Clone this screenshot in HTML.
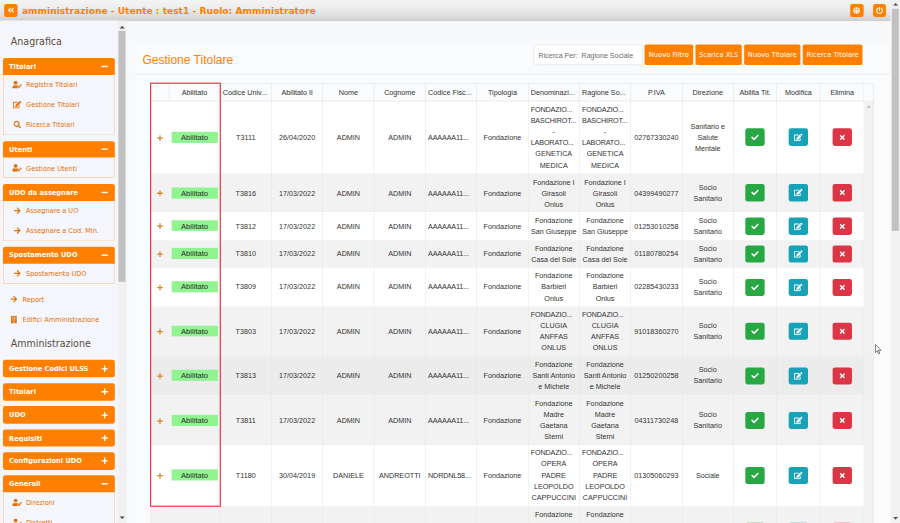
<!DOCTYPE html>
<html lang="it">
<head>
<meta charset="utf-8">
<title>amministrazione</title>
<style>
*{box-sizing:border-box}
html,body{margin:0;padding:0;width:900px;height:523px;overflow:hidden;background:#f5f6fa}
body{font-family:"Liberation Sans",sans-serif}
#app{position:absolute;left:0;top:0;width:1536px;height:893px;transform:scale(.5859375);transform-origin:0 0;overflow:hidden;background:#f8f9fb}
svg{display:block}
/* top bar */
#top{position:absolute;left:0;top:0;width:1520px;height:36px;background:linear-gradient(#f4f4f4 0%,#eeeeee 35%,#dedede 75%,#cecece 100%)}
.tbtn{position:absolute;top:6.6px;width:22.6px;height:22.6px;background:#ff8000;border-radius:4px;display:flex;align-items:center;justify-content:center}
#ttl{position:absolute;left:37.5px;top:0;height:35px;font:bold 15.55px/38.6px "DejaVu Sans","Liberation Sans",sans-serif;color:#ff8000;white-space:nowrap}
/* sidebar */
#side{position:absolute;left:0;top:35px;width:201px;height:858px;background:#f4f6fb;overflow:hidden;font-family:"DejaVu Sans Condensed","Liberation Sans",sans-serif}
#sbar{position:absolute;left:201px;top:35px;width:14.8px;height:858px;background:#f1f1f1}
#sbar i{position:absolute;left:1.2px;width:11.6px;background:#c1c1c1}
.h{font-size:18px;color:#5b4a40;height:64.2px;line-height:30px;padding:19.5px 0 0 18.5px;white-space:nowrap}
.h2{height:51.3px;padding-top:9.1px}
.sec{margin:0 5px 9.8px 5px;width:191px}
.sh{height:28.6px;background:#ff8000;border-radius:4px 4px 0 0;color:#fff;font-weight:bold;font-size:12.6px;line-height:28.6px;padding-left:10.5px;position:relative;white-space:nowrap}
.sh.c{height:29.8px;line-height:29.8px;border-radius:4px}
.sec.c{margin-bottom:9.6px}
.sh b{position:absolute;right:12px;top:0;height:100%;display:flex;align-items:center}
.sb{border:1px solid #ffbb7a;border-top:0;border-radius:0 0 4px 4px}
.it{height:34px;display:flex;align-items:center;padding-left:15px;color:#e46f08;font-size:12.4px;white-space:nowrap}
.it u{text-decoration:none;display:flex;justify-content:center;width:17px;margin-right:6.5px;flex:none}
.it.o{padding-left:15px;height:35px}
.it.o1{margin-top:-1.2px;height:34.6px}
/* main */
#panel{position:absolute;left:229px;top:75px;width:1290.5px;height:830px;background:#fafbfc}
#ph{position:absolute;left:0;top:0;width:100%;height:51.8px;border-bottom:1.4px solid #dde2e8}
#pt{position:absolute;left:14px;top:0;line-height:53.4px;font-size:20.5px;color:#ff8000;white-space:nowrap}
.btn{position:absolute;top:.5px;height:35.4px;background:#ff8000;border-radius:3px;color:#fff;font:12.8px/35.4px "DejaVu Sans Condensed","Liberation Sans",sans-serif;text-align:center;white-space:nowrap}
#inp{position:absolute;left:682px;top:.5px;width:184.5px;height:35.4px;background:#fff;border:1px solid #dcdfe4;border-radius:4px;font-size:12.1px;line-height:36px;color:#6c6c6c;padding-left:7.2px;white-space:nowrap}
/* grid */
#grid{position:absolute;z-index:0;left:27.4px;top:67.4px;width:1234.6px;font-size:12.3px;color:#333}
table{border-collapse:collapse;table-layout:fixed;width:1217.6px}
col.w{width:87.6px}
th{height:29.2px;font-weight:normal;text-align:center;border:1px solid #e1e4e9;padding:2px 0 0 0;white-space:nowrap;background:#fafbfc;overflow:hidden}
th.l{text-align:left;padding-left:4px}
td i{display:block;font-style:normal;text-align:left;padding-left:4px;letter-spacing:-.25px}
td{padding:var(--p) 0 0 0;text-align:center;line-height:19px;border-left:1px solid #e6e7e9;border-right:1px solid #e6e7e9;white-space:nowrap}
td.b{padding-top:0}
td:first-child{border-right:0}td:nth-child(2){border-left:0}
td:first-child{position:relative}
td:first-child::before{content:"";position:absolute;left:0;top:0;width:1218.2px;height:100%;z-index:-1;background:#fff}
tr.g td:first-child::before{background:#f2f2f2}
tr.hv td:first-child::before{background:#ececec}
tr.n2{height:47.5px}tr.n3{height:66.5px}tr.n4{height:85.5px}tr.n5{height:104.5px}tr.n6{height:123.5px}
.pill{display:block;margin:0 auto;width:79px;height:18.9px;line-height:20.4px;font-size:13px;background:#90f490;color:#2a2a2a;position:relative;left:.3px;top:-1.1px}
.ab{display:flex;width:33px;height:29.3px;border-radius:4px;margin:0 auto;align-items:center;justify-content:center}
.gr{background:#28a745}.bl{background:#17a2b8}.rd{background:#dc3545}
#gsc{position:absolute;left:1218.6px;top:30.2px;width:16px;height:800px;background:#f1f1f1;border-right:1px solid #e4e4e4}
#gsh{position:absolute;left:1218.6px;top:0;width:16px;height:30.2px;background:#fafbfc;border:1px solid #e1e4e9;border-left:0}
#red{position:absolute;left:26.8px;top:66.3px;width:121.5px;height:723.5px;border:2.6px solid #ec3440;pointer-events:none}
#pbar{position:absolute;left:1520px;top:0;width:16px;height:893px;background:#f1f1f1}
#pbar i{position:absolute;left:2px;width:12px;background:#c1c1c1}
.ar{position:absolute}
</style>
</head>
<body>
<div id="app">

<div id="top">
 <div class="tbtn" style="left:7.3px"><svg width="11.38" height="13" viewBox="0 0 448 512"><path fill="#fff" d="M223.700 239l136-136c9.400-9.400 24.600-9.400 33.900 0l22.600 22.600c9.400 9.400 9.400 24.600 0 33.900L319.900 256l96.400 96.400c9.400 9.400 9.400 24.600 0 33.900L393.700 409c-9.400 9.400-24.600 9.400-33.900 0l-136-136c-9.500-9.400-9.500-24.600-.1-34zm-192 34l136 136c9.400 9.400 24.600 9.400 33.900 0l22.600-22.600c9.400-9.400 9.400-24.600 0-33.900L127.900 256l96.400-96.400c9.400-9.400 9.400-24.600 0-33.900L201.700 103c-9.400-9.400-24.600-9.400-33.900 0l-136 136c-9.500 9.400-9.500 24.600-.1 34z"/></svg></div>
 <div id="ttl">amministrazione - Utente : test1 - Ruolo: Amministratore</div>
 <div class="tbtn" style="left:1451px"><svg width="11.62" height="12" viewBox="0 0 496 512"><path fill="#fff" d="M336.500 160C322 70.700 287.800 8 248 8s-74 62.700-88.500 152h177zM152 256c0 22.200 1.200 43.500 3.300 64h185.300c2.100-20.500 3.300-41.800 3.300-64s-1.200-43.500-3.300-64H155.300c-2.100 20.500-3.300 41.800-3.300 64zm324.700-96c-28.600-67.900-86.500-120.400-158-141.600 24.400 33.800 41.200 84.700 50 141.600h108zM177.200 18.400C105.800 39.600 47.800 92.100 19.300 160h108c8.700-56.900 25.500-107.800 49.900-141.600zM487.400 192H372.700c2.100 21 3.300 42.500 3.300 64s-1.200 43-3.300 64h114.600c5.500-20.500 8.600-41.800 8.600-64s-3.100-43.500-8.500-64zM120 256c0-21.500 1.200-43 3.300-64H8.600C3.200 212.500 0 233.800 0 256s3.200 43.500 8.600 64h114.600c-2-21-3.200-42.500-3.200-64zm39.500 96c14.500 89.300 48.700 152 88.500 152s74-62.700 88.500-152h-177zm159.300 141.600c71.400-21.200 129.400-73.700 158-141.600h-108c-8.800 56.900-25.600 107.800-50 141.600zM19.300 352c28.600 67.900 86.500 120.400 158 141.600-24.400-33.800-41.200-84.700-50-141.600h-108z"/></svg></div>
 <div class="tbtn" style="left:1489.5px"><svg width="12.0" height="12" viewBox="0 0 512 512"><path fill="#fff" d="M400 54.100c63 45 104 118.600 104 201.900 0 136.800-110.800 247.700-247.500 248C120 504.300 8.200 393 8 256.400 7.900 173.100 48.900 99.300 111.800 54.200c11.700-8.300 28-4.800 35 7.700L162.600 90c5.900 10.500 3.100 23.800-6.600 31-41.500 30.800-68 79.600-68 134.900-.1 92.300 74.500 168.100 168 168.100 91.600 0 168.600-74.200 168-169.100-.3-51.800-24.700-101.800-68.100-134-9.700-7.200-12.400-20.500-6.500-30.900l15.800-28.100c7-12.400 23.200-16.100 34.800-7.800zM296 264V24c0-13.300-10.700-24-24-24h-32c-13.300 0-24 10.700-24 24v240c0 13.300 10.700 24 24 24h32c13.300 0 24-10.700 24-24z"/></svg></div>
</div>

<div id="side">
<div class="h">Anagrafica</div>
<div class="sec"><div class="sh">Titolari<b><svg width="11.38" height="13" viewBox="0 0 448 512"><path fill="#fff" d="M416 208H32c-17.67 0-32 14.33-32 32v32c0 17.67 14.33 32 32 32h384c17.670 0 32-14.330 32-32v-32c0-17.670-14.330-32-32-32z"/></svg></b></div><div class="sb"><div class="it"><u><svg width="16.25" height="13" viewBox="0 0 640 512"><path fill="#e46f08" d="M224 256c70.700 0 128-57.300 128-128S294.700 0 224 0 96 57.300 96 128s57.300 128 128 128zm89.600 32h-16.700c-22.200 10.200-46.900 16-72.900 16s-50.600-5.800-72.900-16h-16.700C60.200 288 0 348.200 0 422.400V464c0 26.500 21.500 48 48 48h274.900c-2.400-6.800-3.400-14-2.600-21.300l6.800-60.900 1.200-11.100 7.900-7.900 77.300-77.300c-24.500-27.700-60-45.500-99.900-45.500zm45.300 145.300l-6.800 61c-1.100 10.200 7.500 18.800 17.600 17.600l60.900-6.800 137.900-137.900-71.700-71.700-137.900 137.800zM633 268.900L595.100 231c-9.300-9.300-24.500-9.300-33.800 0l-37.800 37.800-4.100 4.100 71.800 71.700 41.800-41.800c9.300-9.400 9.300-24.500 0-33.900z"/></svg></u><span>Registra Titolari</span></div><div class="it"><u><svg width="14.62" height="13" viewBox="0 0 576 512"><path fill="#e46f08" d="M402.600 83.200l90.200 90.200c3.800 3.800 3.800 10 0 13.800L274.400 405.600l-92.800 10.300c-12.400 1.400-22.900-9.100-21.500-21.500l10.300-92.800L388.800 83.200c3.800-3.800 10-3.800 13.800 0zm162-22.900l-48.800-48.800c-15.200-15.200-39.900-15.200-55.200 0l-35.400 35.400c-3.800 3.800-3.800 10 0 13.800l90.200 90.200c3.800 3.800 10 3.800 13.800 0l35.400-35.400c15.200-15.300 15.200-40 0-55.200zM384 346.200V448H64V128h229.800c3.200 0 6.200-1.300 8.500-3.500l40-40c7.600-7.600 2.200-20.500-8.500-20.500H48C21.500 64 0 85.500 0 112v352c0 26.500 21.500 48 48 48h352c26.500 0 48-21.500 48-48V306.200c0-10.700-12.900-16-20.500-8.500l-40 40c-2.200 2.300-3.500 5.300-3.500 8.500z"/></svg></u><span>Gestione Titolari</span></div><div class="it"><u><svg width="13.0" height="13" viewBox="0 0 512 512"><path fill="#e46f08" d="M505 442.700L405.300 343c-4.500-4.500-10.600-7-17-7H372c27.600-35.300 44-79.700 44-128C416 93.100 322.900 0 208 0S0 93.100 0 208s93.100 208 208 208c48.300 0 92.700-16.400 128-44v16.300c0 6.400 2.500 12.500 7 17l99.700 99.700c9.400 9.400 24.600 9.400 33.900 0l28.300-28.300c9.400-9.400 9.400-24.600.1-34zM208 336c-70.700 0-128-57.200-128-128 0-70.700 57.200-128 128-128 70.700 0 128 57.200 128 128 0 70.700-57.200 128-128 128z"/></svg></u><span>Ricerca Titolari</span></div></div></div>
<div class="sec"><div class="sh">Utenti<b><svg width="11.38" height="13" viewBox="0 0 448 512"><path fill="#fff" d="M416 208H32c-17.67 0-32 14.33-32 32v32c0 17.67 14.33 32 32 32h384c17.670 0 32-14.330 32-32v-32c0-17.670-14.330-32-32-32z"/></svg></b></div><div class="sb"><div class="it"><u><svg width="16.25" height="13" viewBox="0 0 640 512"><path fill="#e46f08" d="M224 256c70.700 0 128-57.300 128-128S294.700 0 224 0 96 57.300 96 128s57.300 128 128 128zm89.600 32h-16.700c-22.200 10.200-46.900 16-72.900 16s-50.600-5.800-72.900-16h-16.700C60.200 288 0 348.200 0 422.400V464c0 26.500 21.500 48 48 48h274.900c-2.400-6.800-3.400-14-2.600-21.300l6.800-60.900 1.200-11.100 7.900-7.900 77.300-77.300c-24.500-27.700-60-45.500-99.900-45.500zm45.300 145.300l-6.800 61c-1.100 10.200 7.500 18.800 17.600 17.600l60.900-6.800 137.900-137.900-71.700-71.700-137.900 137.800zM633 268.900L595.100 231c-9.300-9.300-24.500-9.300-33.800 0l-37.800 37.800-4.100 4.100 71.800 71.700 41.800-41.800c9.300-9.400 9.300-24.500 0-33.900z"/></svg></u><span>Gestione Utenti</span></div></div></div>
<div class="sec"><div class="sh">UDO da assegnare<b><svg width="11.38" height="13" viewBox="0 0 448 512"><path fill="#fff" d="M416 208H32c-17.67 0-32 14.33-32 32v32c0 17.67 14.33 32 32 32h384c17.670 0 32-14.330 32-32v-32c0-17.670-14.330-32-32-32z"/></svg></b></div><div class="sb"><div class="it"><u><svg width="11.38" height="13" viewBox="0 0 448 512"><path fill="#e46f08" d="M190.5 66.9l22.2-22.2c9.4-9.4 24.6-9.4 33.900 0L441 239c9.400 9.400 9.400 24.600 0 33.900L246.600 467.300c-9.400 9.400-24.600 9.400-33.900 0l-22.200-22.200c-9.500-9.500-9.300-25 .4-34.300L311.400 296H24c-13.300 0-24-10.700-24-24v-32c0-13.300 10.700-24 24-24h287.400L190.900 101.200c-9.800-9.300-10-24.800-.4-34.300z"/></svg></u><span>Assegnare a UO</span></div><div class="it"><u><svg width="11.38" height="13" viewBox="0 0 448 512"><path fill="#e46f08" d="M190.5 66.9l22.2-22.2c9.4-9.4 24.6-9.4 33.900 0L441 239c9.400 9.400 9.400 24.600 0 33.900L246.600 467.300c-9.400 9.400-24.600 9.400-33.900 0l-22.200-22.200c-9.500-9.500-9.300-25 .4-34.300L311.400 296H24c-13.300 0-24-10.700-24-24v-32c0-13.300 10.700-24 24-24h287.400L190.900 101.200c-9.800-9.300-10-24.800-.4-34.300z"/></svg></u><span>Assegnare a Cod. Min.</span></div></div></div>
<div class="sec"><div class="sh">Spostamento UDO<b><svg width="11.38" height="13" viewBox="0 0 448 512"><path fill="#fff" d="M416 208H32c-17.67 0-32 14.33-32 32v32c0 17.67 14.33 32 32 32h384c17.670 0 32-14.330 32-32v-32c0-17.670-14.330-32-32-32z"/></svg></b></div><div class="sb"><div class="it"><u><svg width="11.38" height="13" viewBox="0 0 448 512"><path fill="#e46f08" d="M190.5 66.9l22.2-22.2c9.4-9.4 24.6-9.4 33.900 0L441 239c9.400 9.400 9.400 24.600 0 33.900L246.600 467.300c-9.400 9.400-24.600 9.400-33.900 0l-22.200-22.200c-9.500-9.500-9.300-25 .4-34.300L311.400 296H24c-13.300 0-24-10.700-24-24v-32c0-13.300 10.700-24 24-24h287.400L190.900 101.200c-9.800-9.300-10-24.800-.4-34.300z"/></svg></u><span>Spostamento UDO</span></div></div></div>
<div class="it o o1"><u><svg width="11.38" height="13" viewBox="0 0 448 512"><path fill="#e46f08" d="M190.5 66.9l22.2-22.2c9.4-9.4 24.6-9.4 33.900 0L441 239c9.400 9.400 9.400 24.600 0 33.900L246.600 467.300c-9.400 9.400-24.600 9.400-33.900 0l-22.200-22.200c-9.500-9.500-9.300-25 .4-34.300L311.400 296H24c-13.300 0-24-10.700-24-24v-32c0-13.300 10.700-24 24-24h287.400L190.900 101.200c-9.800-9.300-10-24.800-.4-34.300z"/></svg></u><span>Report</span></div><div class="it o"><u><svg width="11.38" height="13" viewBox="0 0 448 512"><path fill="#e46f08" d="M436 480h-20V24c0-13.255-10.745-24-24-24H56C42.745 0 32 10.745 32 24v456H12c-6.627 0-12 5.373-12 12v20h448v-20c0-6.627-5.373-12-12-12zM128 76c0-6.627 5.373-12 12-12h40c6.627 0 12 5.373 12 12v40c0 6.627-5.373 12-12 12h-40c-6.627 0-12-5.373-12-12V76zm0 96c0-6.627 5.373-12 12-12h40c6.627 0 12 5.373 12 12v40c0 6.627-5.373 12-12 12h-40c-6.627 0-12-5.373-12-12v-40zm52 148h-40c-6.627 0-12-5.373-12-12v-40c0-6.627 5.373-12 12-12h40c6.627 0 12 5.373 12 12v40c0 6.627-5.373 12-12 12zm76 160h-64v-84c0-6.627 5.373-12 12-12h40c6.627 0 12 5.373 12 12v84zm64-172c0 6.627-5.373 12-12 12h-40c-6.627 0-12-5.373-12-12v-40c0-6.627 5.373-12 12-12h40c6.627 0 12 5.373 12 12v40zm0-96c0 6.627-5.373 12-12 12h-40c-6.627 0-12-5.373-12-12v-40c0-6.627 5.373-12 12-12h40c6.627 0 12 5.373 12 12v40zm0-96c0 6.627-5.373 12-12 12h-40c-6.627 0-12-5.373-12-12V76c0-6.627 5.373-12 12-12h40c6.627 0 12 5.373 12 12v40z"/></svg></u><span>Edifici Amministrazione</span></div>
<div class="h h2">Amministrazione</div>
<div class="sec c"><div class="sh c">Gestione Codici ULSS<b><svg width="11.38" height="13" viewBox="0 0 448 512"><path fill="#fff" d="M416 208H272V64c0-17.67-14.33-32-32-32h-32c-17.67 0-32 14.33-32 32v144H32c-17.67 0-32 14.33-32 32v32c0 17.67 14.33 32 32 32h144v144c0 17.67 14.33 32 32 32h32c17.67 0 32-14.33 32-32V304h144c17.67 0 32-14.33 32-32v-32c0-17.67-14.33-32-32-32z"/></svg></b></div></div>
<div class="sec c"><div class="sh c">Titolari<b><svg width="11.38" height="13" viewBox="0 0 448 512"><path fill="#fff" d="M416 208H272V64c0-17.67-14.33-32-32-32h-32c-17.67 0-32 14.33-32 32v144H32c-17.67 0-32 14.33-32 32v32c0 17.67 14.33 32 32 32h144v144c0 17.67 14.33 32 32 32h32c17.67 0 32-14.33 32-32V304h144c17.67 0 32-14.33 32-32v-32c0-17.67-14.33-32-32-32z"/></svg></b></div></div>
<div class="sec c"><div class="sh c">UDO<b><svg width="11.38" height="13" viewBox="0 0 448 512"><path fill="#fff" d="M416 208H272V64c0-17.67-14.33-32-32-32h-32c-17.67 0-32 14.33-32 32v144H32c-17.67 0-32 14.33-32 32v32c0 17.67 14.33 32 32 32h144v144c0 17.67 14.33 32 32 32h32c17.67 0 32-14.33 32-32V304h144c17.67 0 32-14.33 32-32v-32c0-17.67-14.33-32-32-32z"/></svg></b></div></div>
<div class="sec c"><div class="sh c">Requisiti<b><svg width="11.38" height="13" viewBox="0 0 448 512"><path fill="#fff" d="M416 208H272V64c0-17.67-14.33-32-32-32h-32c-17.67 0-32 14.33-32 32v144H32c-17.67 0-32 14.33-32 32v32c0 17.67 14.33 32 32 32h144v144c0 17.67 14.33 32 32 32h32c17.67 0 32-14.33 32-32V304h144c17.67 0 32-14.33 32-32v-32c0-17.67-14.33-32-32-32z"/></svg></b></div></div>
<div class="sec c"><div class="sh c">Configurazioni UDO<b><svg width="11.38" height="13" viewBox="0 0 448 512"><path fill="#fff" d="M416 208H272V64c0-17.67-14.33-32-32-32h-32c-17.67 0-32 14.33-32 32v144H32c-17.67 0-32 14.33-32 32v32c0 17.67 14.33 32 32 32h144v144c0 17.67 14.33 32 32 32h32c17.67 0 32-14.33 32-32V304h144c17.67 0 32-14.33 32-32v-32c0-17.67-14.33-32-32-32z"/></svg></b></div></div>
<div class="sec"><div class="sh">Generali<b><svg width="11.38" height="13" viewBox="0 0 448 512"><path fill="#fff" d="M416 208H32c-17.67 0-32 14.33-32 32v32c0 17.67 14.33 32 32 32h384c17.670 0 32-14.330 32-32v-32c0-17.670-14.330-32-32-32z"/></svg></b></div><div class="sb"><div class="it"><u><svg width="16.25" height="13" viewBox="0 0 640 512"><path fill="#e46f08" d="M224 256c70.700 0 128-57.300 128-128S294.700 0 224 0 96 57.300 96 128s57.300 128 128 128zm89.600 32h-16.700c-22.200 10.200-46.900 16-72.900 16s-50.600-5.800-72.900-16h-16.700C60.200 288 0 348.200 0 422.400V464c0 26.500 21.500 48 48 48h274.900c-2.400-6.800-3.400-14-2.600-21.300l6.800-60.900 1.200-11.100 7.900-7.900 77.300-77.300c-24.500-27.700-60-45.500-99.900-45.500zm45.300 145.300l-6.800 61c-1.100 10.200 7.500 18.800 17.600 17.600l60.900-6.800 137.900-137.900-71.700-71.700-137.900 137.800zM633 268.900L595.100 231c-9.300-9.300-24.500-9.300-33.800 0l-37.800 37.800-4.100 4.100 71.800 71.700 41.800-41.800c9.300-9.400 9.300-24.500 0-33.900z"/></svg></u><span>Direzioni</span></div><div class="it"><u><svg width="16.25" height="13" viewBox="0 0 640 512"><path fill="#e46f08" d="M224 256c70.700 0 128-57.300 128-128S294.700 0 224 0 96 57.300 96 128s57.300 128 128 128zm89.600 32h-16.700c-22.200 10.200-46.900 16-72.900 16s-50.600-5.800-72.900-16h-16.700C60.200 288 0 348.200 0 422.400V464c0 26.500 21.500 48 48 48h274.900c-2.400-6.800-3.400-14-2.600-21.300l6.800-60.900 1.200-11.100 7.900-7.900 77.300-77.300c-24.500-27.700-60-45.500-99.900-45.500zm45.300 145.300l-6.800 61c-1.100 10.200 7.500 18.800 17.600 17.600l60.900-6.800 137.900-137.900-71.700-71.700-137.900 137.800zM633 268.900L595.100 231c-9.300-9.300-24.500-9.300-33.800 0l-37.800 37.800-4.100 4.100 71.800 71.700 41.800-41.800c9.300-9.400 9.300-24.500 0-33.900z"/></svg></u><span>Distretti</span></div><div class="it"><u><svg width="16.25" height="13" viewBox="0 0 640 512"><path fill="#e46f08" d="M224 256c70.700 0 128-57.300 128-128S294.700 0 224 0 96 57.300 96 128s57.300 128 128 128zm89.600 32h-16.700c-22.200 10.200-46.900 16-72.900 16s-50.600-5.800-72.900-16h-16.700C60.200 288 0 348.200 0 422.400V464c0 26.500 21.500 48 48 48h274.900c-2.400-6.800-3.400-14-2.600-21.300l6.800-60.900 1.200-11.100 7.900-7.900 77.300-77.300c-24.500-27.700-60-45.500-99.900-45.500zm45.300 145.300l-6.800 61c-1.100 10.200 7.500 18.800 17.600 17.600l60.900-6.800 137.900-137.900-71.700-71.700-137.900 137.800zM633 268.900L595.100 231c-9.300-9.300-24.500-9.300-33.800 0l-37.800 37.800-4.100 4.100 71.800 71.700 41.800-41.800c9.300-9.400 9.300-24.500 0-33.900z"/></svg></u><span>Comuni</span></div></div></div>

</div>
<div id="sbar"><svg class="ar" width="9" height="5" viewBox="0 0 9 5" style="left:3px;top:8.5px"><path d="M0 5 L4.5 0 L9 5Z" fill="#505050"/></svg><i style="top:18px;height:428px"></i><svg class="ar" width="9" height="5" viewBox="0 0 9 5" style="left:3px;top:846px"><path d="M0 0 L4.5 5 L9 0Z" fill="#505050"/></svg></div>

<div id="panel">
 <div id="ph">
  <div id="pt">Gestione Titolare</div>
  <div id="inp">Ricerca Per:&nbsp; Ragione Sociale</div>
  <div class="btn" style="left:871px;width:83px">Nuovo Filtro</div>
  <div class="btn" style="left:958px;width:79px">Scarica XLS</div>
  <div class="btn" style="left:1041.2px;width:96px">Nuovo Titolare</div>
  <div class="btn" style="left:1141px;width:102px">Ricerca Titolare</div>
 </div>
 <div id="grid"><table><colgroup><col style="width:31.4px"><col style="width:87.4px"><col class="w"><col class="w"><col class="w"><col class="w"><col class="w"><col class="w"><col class="w"><col class="w"><col class="w"><col class="w"><col style="width:74px"><col style="width:74.2px"><col style="width:75.2px"></colgroup>
<thead><tr><th></th><th>Abilitato</th><th class="l">Codice Univ...</th><th>Abilitato Il</th><th>Nome</th><th>Cognome</th><th class="l">Codice Fisc...</th><th>Tipologia</th><th class="l">Denominazi...</th><th class="l">Ragione So...</th><th>P.IVA</th><th>Direzione</th><th>Abilita Tit.</th><th>Modifica</th><th>Elimina</th></tr></thead>
<tbody>
<tr class="w" style="height:123.6px;--p:2.4px"><td><svg style="margin:0 auto" width="10.15" height="11.6" viewBox="0 0 448 512"><path fill="#dc8420" d="M416 208H272V64c0-17.67-14.33-32-32-32h-32c-17.67 0-32 14.33-32 32v144H32c-17.67 0-32 14.33-32 32v32c0 17.67 14.33 32 32 32h144v144c0 17.67 14.33 32 32 32h32c17.67 0 32-14.33 32-32V304h144c17.67 0 32-14.33 32-32v-32c0-17.67-14.33-32-32-32z"/></svg></td><td><span class="pill">Abilitato</span></td><td>T3111</td><td>26/04/2020</td><td>ADMIN</td><td>ADMIN</td><td><i>AAAAAA11...</i></td><td>Fondazione</td><td><i>FONDAZIO...</i><i>BASCHIROT...</i><span style='display:block'>-</span><i>LABORATO...</i>GENETICA<br>MEDICA</td><td><i>FONDAZIO...</i><i>BASCHIROT...</i><span style='display:block'>-</span><i>LABORATO...</i>GENETICA<br>MEDICA</td><td>02767330240</td><td>Sanitario e<br>Salute<br>Mentale</td><td class="b"><span class="ab gr"><svg width="13.0" height="13" viewBox="0 0 512 512"><path fill="#fff" d="M173.898 439.404l-166.4-166.4c-9.997-9.997-9.997-26.206 0-36.204l36.203-36.204c9.997-9.998 26.207-9.998 36.204 0L192 312.69 432.095 72.596c9.997-9.997 26.207-9.997 36.204 0l36.203 36.204c9.997 9.997 9.997 26.206 0 36.204l-294.4 294.401c-9.998 9.997-26.207 9.997-36.204-.001z"/></svg></span></td><td class="b"><span class="ab bl"><svg width="14.62" height="13" viewBox="0 0 576 512"><path fill="#fff" d="M402.600 83.200l90.200 90.200c3.800 3.800 3.800 10 0 13.800L274.400 405.600l-92.800 10.300c-12.400 1.400-22.900-9.100-21.500-21.500l10.300-92.800L388.800 83.200c3.800-3.800 10-3.800 13.800 0zm162-22.900l-48.800-48.800c-15.200-15.200-39.900-15.200-55.200 0l-35.400 35.400c-3.800 3.800-3.800 10 0 13.800l90.200 90.200c3.800 3.800 10 3.800 13.800 0l35.400-35.400c15.200-15.300 15.200-40 0-55.200zM384 346.200V448H64V128h229.800c3.200 0 6.200-1.300 8.500-3.500l40-40c7.600-7.600 2.200-20.500-8.500-20.500H48C21.500 64 0 85.500 0 112v352c0 26.500 21.500 48 48 48h352c26.500 0 48-21.500 48-48V306.200c0-10.700-12.900-16-20.500-8.500l-40 40c-2.200 2.300-3.500 5.300-3.500 8.500z"/></svg></span></td><td class="b"><span class="ab rd"><svg width="8.94" height="13" viewBox="0 0 352 512"><path fill="#fff" d="M242.72 256l100.07-100.07c12.28-12.28 12.28-32.19 0-44.48l-22.24-22.24c-12.28-12.28-32.19-12.28-44.48 0L176 189.28 75.93 89.21c-12.28-12.28-32.19-12.28-44.48 0L9.21 111.45c-12.28 12.28-12.28 32.19 0 44.48L109.28 256 9.21 356.07c-12.28 12.28-12.28 32.19 0 44.48l22.24 22.24c12.28 12.28 32.2 12.28 44.48 0L176 322.72l100.07 100.07c12.28 12.28 32.2 12.28 44.48 0l22.24-22.24c12.28-12.28 12.28-32.19 0-44.48L242.72 256z"/></svg></span></td></tr>
<tr class="g" style="height:66.6px;--p:2.4px"><td><svg style="margin:0 auto" width="10.15" height="11.6" viewBox="0 0 448 512"><path fill="#dc8420" d="M416 208H272V64c0-17.67-14.33-32-32-32h-32c-17.67 0-32 14.33-32 32v144H32c-17.67 0-32 14.33-32 32v32c0 17.67 14.33 32 32 32h144v144c0 17.67 14.33 32 32 32h32c17.67 0 32-14.33 32-32V304h144c17.67 0 32-14.33 32-32v-32c0-17.67-14.33-32-32-32z"/></svg></td><td><span class="pill">Abilitato</span></td><td>T3816</td><td>17/03/2022</td><td>ADMIN</td><td>ADMIN</td><td><i>AAAAAA11...</i></td><td>Fondazione</td><td>Fondazione I<br>Girasoli<br>Onlus</td><td>Fondazione I<br>Girasoli<br>Onlus</td><td>04399490277</td><td>Socio<br>Sanitario</td><td class="b"><span class="ab gr"><svg width="13.0" height="13" viewBox="0 0 512 512"><path fill="#fff" d="M173.898 439.404l-166.4-166.4c-9.997-9.997-9.997-26.206 0-36.204l36.203-36.204c9.997-9.998 26.207-9.998 36.204 0L192 312.69 432.095 72.596c9.997-9.997 26.207-9.997 36.204 0l36.203 36.204c9.997 9.997 9.997 26.206 0 36.204l-294.4 294.401c-9.998 9.997-26.207 9.997-36.204-.001z"/></svg></span></td><td class="b"><span class="ab bl"><svg width="14.62" height="13" viewBox="0 0 576 512"><path fill="#fff" d="M402.600 83.200l90.200 90.200c3.800 3.800 3.800 10 0 13.800L274.400 405.600l-92.800 10.300c-12.400 1.400-22.900-9.100-21.500-21.500l10.300-92.800L388.800 83.200c3.800-3.800 10-3.800 13.800 0zm162-22.900l-48.800-48.800c-15.200-15.200-39.900-15.200-55.200 0l-35.400 35.400c-3.800 3.800-3.800 10 0 13.800l90.200 90.200c3.800 3.800 10 3.800 13.800 0l35.400-35.400c15.200-15.300 15.200-40 0-55.200zM384 346.200V448H64V128h229.800c3.200 0 6.200-1.300 8.500-3.500l40-40c7.600-7.600 2.200-20.500-8.500-20.500H48C21.500 64 0 85.500 0 112v352c0 26.500 21.500 48 48 48h352c26.500 0 48-21.500 48-48V306.200c0-10.700-12.900-16-20.500-8.500l-40 40c-2.200 2.300-3.500 5.300-3.500 8.500z"/></svg></span></td><td class="b"><span class="ab rd"><svg width="8.94" height="13" viewBox="0 0 352 512"><path fill="#fff" d="M242.72 256l100.07-100.07c12.28-12.28 12.28-32.19 0-44.48l-22.24-22.24c-12.28-12.28-32.19-12.28-44.48 0L176 189.28 75.93 89.21c-12.28-12.28-32.19-12.28-44.48 0L9.21 111.45c-12.28 12.28-12.28 32.19 0 44.48L109.28 256 9.21 356.07c-12.28 12.28-12.28 32.19 0 44.48l22.24 22.24c12.28 12.28 32.2 12.28 44.48 0L176 322.72l100.07 100.07c12.28 12.28 32.2 12.28 44.48 0l22.24-22.24c12.28-12.28 12.28-32.19 0-44.48L242.72 256z"/></svg></span></td></tr>
<tr class="w" style="height:47.6px;--p:0px"><td><svg style="margin:0 auto" width="10.15" height="11.6" viewBox="0 0 448 512"><path fill="#dc8420" d="M416 208H272V64c0-17.67-14.33-32-32-32h-32c-17.67 0-32 14.33-32 32v144H32c-17.67 0-32 14.33-32 32v32c0 17.67 14.33 32 32 32h144v144c0 17.67 14.33 32 32 32h32c17.67 0 32-14.33 32-32V304h144c17.67 0 32-14.33 32-32v-32c0-17.67-14.33-32-32-32z"/></svg></td><td><span class="pill">Abilitato</span></td><td>T3812</td><td>17/03/2022</td><td>ADMIN</td><td>ADMIN</td><td><i>AAAAAA11...</i></td><td>Fondazione</td><td>Fondazione<br>San Giuseppe</td><td>Fondazione<br>San Giuseppe</td><td>01253010258</td><td>Socio<br>Sanitario</td><td class="b"><span class="ab gr"><svg width="13.0" height="13" viewBox="0 0 512 512"><path fill="#fff" d="M173.898 439.404l-166.4-166.4c-9.997-9.997-9.997-26.206 0-36.204l36.203-36.204c9.997-9.998 26.207-9.998 36.204 0L192 312.69 432.095 72.596c9.997-9.997 26.207-9.997 36.204 0l36.203 36.204c9.997 9.997 9.997 26.206 0 36.204l-294.4 294.401c-9.998 9.997-26.207 9.997-36.204-.001z"/></svg></span></td><td class="b"><span class="ab bl"><svg width="14.62" height="13" viewBox="0 0 576 512"><path fill="#fff" d="M402.600 83.200l90.200 90.200c3.800 3.800 3.800 10 0 13.800L274.400 405.600l-92.800 10.300c-12.400 1.400-22.900-9.100-21.500-21.500l10.300-92.800L388.800 83.200c3.800-3.800 10-3.800 13.800 0zm162-22.900l-48.800-48.800c-15.200-15.200-39.900-15.200-55.200 0l-35.400 35.400c-3.800 3.800-3.800 10 0 13.800l90.200 90.200c3.800 3.800 10 3.800 13.800 0l35.400-35.400c15.200-15.300 15.200-40 0-55.200zM384 346.200V448H64V128h229.800c3.200 0 6.200-1.300 8.500-3.500l40-40c7.600-7.600 2.200-20.500-8.500-20.500H48C21.500 64 0 85.500 0 112v352c0 26.500 21.500 48 48 48h352c26.500 0 48-21.500 48-48V306.200c0-10.700-12.900-16-20.500-8.500l-40 40c-2.200 2.300-3.500 5.300-3.500 8.500z"/></svg></span></td><td class="b"><span class="ab rd"><svg width="8.94" height="13" viewBox="0 0 352 512"><path fill="#fff" d="M242.72 256l100.07-100.07c12.28-12.28 12.28-32.19 0-44.48l-22.24-22.24c-12.28-12.28-32.19-12.28-44.48 0L176 189.28 75.93 89.21c-12.28-12.28-32.19-12.28-44.48 0L9.21 111.45c-12.28 12.28-12.28 32.19 0 44.48L109.28 256 9.21 356.07c-12.28 12.28-12.28 32.19 0 44.48l22.24 22.24c12.28 12.28 32.2 12.28 44.48 0L176 322.72l100.07 100.07c12.28 12.28 32.2 12.28 44.48 0l22.24-22.24c12.28-12.28 12.28-32.19 0-44.48L242.72 256z"/></svg></span></td></tr>
<tr class="g" style="height:47.45px;--p:0px"><td><svg style="margin:0 auto" width="10.15" height="11.6" viewBox="0 0 448 512"><path fill="#dc8420" d="M416 208H272V64c0-17.67-14.33-32-32-32h-32c-17.67 0-32 14.33-32 32v144H32c-17.67 0-32 14.33-32 32v32c0 17.67 14.33 32 32 32h144v144c0 17.67 14.33 32 32 32h32c17.67 0 32-14.33 32-32V304h144c17.67 0 32-14.33 32-32v-32c0-17.67-14.33-32-32-32z"/></svg></td><td><span class="pill">Abilitato</span></td><td>T3810</td><td>17/03/2022</td><td>ADMIN</td><td>ADMIN</td><td><i>AAAAAA11...</i></td><td>Fondazione</td><td>Fondazione<br>Casa del Sole</td><td>Fondazione<br>Casa del Sole</td><td>01180780254</td><td>Socio<br>Sanitario</td><td class="b"><span class="ab gr"><svg width="13.0" height="13" viewBox="0 0 512 512"><path fill="#fff" d="M173.898 439.404l-166.4-166.4c-9.997-9.997-9.997-26.206 0-36.204l36.203-36.204c9.997-9.998 26.207-9.998 36.204 0L192 312.69 432.095 72.596c9.997-9.997 26.207-9.997 36.204 0l36.203 36.204c9.997 9.997 9.997 26.206 0 36.204l-294.4 294.401c-9.998 9.997-26.207 9.997-36.204-.001z"/></svg></span></td><td class="b"><span class="ab bl"><svg width="14.62" height="13" viewBox="0 0 576 512"><path fill="#fff" d="M402.600 83.200l90.200 90.200c3.800 3.800 3.800 10 0 13.800L274.400 405.600l-92.800 10.300c-12.400 1.400-22.900-9.100-21.500-21.500l10.300-92.800L388.800 83.200c3.800-3.800 10-3.800 13.800 0zm162-22.900l-48.800-48.800c-15.200-15.200-39.900-15.200-55.200 0l-35.400 35.400c-3.800 3.800-3.800 10 0 13.800l90.200 90.200c3.800 3.800 10 3.800 13.800 0l35.400-35.400c15.200-15.300 15.200-40 0-55.200zM384 346.200V448H64V128h229.800c3.200 0 6.200-1.300 8.500-3.500l40-40c7.600-7.600 2.200-20.500-8.500-20.500H48C21.500 64 0 85.500 0 112v352c0 26.500 21.500 48 48 48h352c26.500 0 48-21.500 48-48V306.200c0-10.700-12.900-16-20.500-8.500l-40 40c-2.200 2.300-3.500 5.300-3.500 8.500z"/></svg></span></td><td class="b"><span class="ab rd"><svg width="8.94" height="13" viewBox="0 0 352 512"><path fill="#fff" d="M242.72 256l100.07-100.07c12.28-12.28 12.28-32.19 0-44.48l-22.24-22.24c-12.28-12.28-32.19-12.28-44.48 0L176 189.28 75.93 89.21c-12.28-12.28-32.19-12.28-44.48 0L9.21 111.45c-12.28 12.28-12.28 32.19 0 44.48L109.28 256 9.21 356.07c-12.28 12.28-12.28 32.19 0 44.48l22.24 22.24c12.28 12.28 32.2 12.28 44.48 0L176 322.72l100.07 100.07c12.28 12.28 32.2 12.28 44.48 0l22.24-22.24c12.28-12.28 12.28-32.19 0-44.48L242.72 256z"/></svg></span></td></tr>
<tr class="w" style="height:66.05px;--p:0px"><td><svg style="margin:0 auto" width="10.15" height="11.6" viewBox="0 0 448 512"><path fill="#dc8420" d="M416 208H272V64c0-17.67-14.33-32-32-32h-32c-17.67 0-32 14.33-32 32v144H32c-17.67 0-32 14.33-32 32v32c0 17.67 14.33 32 32 32h144v144c0 17.67 14.33 32 32 32h32c17.67 0 32-14.33 32-32V304h144c17.67 0 32-14.33 32-32v-32c0-17.67-14.33-32-32-32z"/></svg></td><td><span class="pill">Abilitato</span></td><td>T3809</td><td>17/03/2022</td><td>ADMIN</td><td>ADMIN</td><td><i>AAAAAA11...</i></td><td>Fondazione</td><td>Fondazione<br>Barbieri<br>Onlus</td><td>Fondazione<br>Barbieri<br>Onlus</td><td>02285430233</td><td>Socio<br>Sanitario</td><td class="b"><span class="ab gr"><svg width="13.0" height="13" viewBox="0 0 512 512"><path fill="#fff" d="M173.898 439.404l-166.4-166.4c-9.997-9.997-9.997-26.206 0-36.204l36.203-36.204c9.997-9.998 26.207-9.998 36.204 0L192 312.69 432.095 72.596c9.997-9.997 26.207-9.997 36.204 0l36.203 36.204c9.997 9.997 9.997 26.206 0 36.204l-294.4 294.401c-9.998 9.997-26.207 9.997-36.204-.001z"/></svg></span></td><td class="b"><span class="ab bl"><svg width="14.62" height="13" viewBox="0 0 576 512"><path fill="#fff" d="M402.600 83.200l90.200 90.200c3.800 3.800 3.800 10 0 13.800L274.400 405.600l-92.800 10.300c-12.400 1.400-22.900-9.100-21.500-21.500l10.300-92.800L388.800 83.200c3.800-3.800 10-3.800 13.800 0zm162-22.900l-48.800-48.800c-15.200-15.200-39.900-15.200-55.200 0l-35.400 35.400c-3.800 3.800-3.800 10 0 13.800l90.200 90.200c3.800 3.800 10 3.800 13.800 0l35.400-35.400c15.200-15.300 15.200-40 0-55.200zM384 346.200V448H64V128h229.800c3.200 0 6.200-1.300 8.500-3.500l40-40c7.600-7.600 2.200-20.500-8.500-20.500H48C21.500 64 0 85.500 0 112v352c0 26.500 21.500 48 48 48h352c26.500 0 48-21.500 48-48V306.200c0-10.700-12.900-16-20.500-8.500l-40 40c-2.200 2.300-3.500 5.300-3.500 8.500z"/></svg></span></td><td class="b"><span class="ab rd"><svg width="8.94" height="13" viewBox="0 0 352 512"><path fill="#fff" d="M242.72 256l100.07-100.07c12.28-12.28 12.28-32.19 0-44.48l-22.24-22.24c-12.28-12.28-32.19-12.28-44.48 0L176 189.28 75.93 89.21c-12.28-12.28-32.19-12.28-44.48 0L9.21 111.45c-12.28 12.28-12.28 32.19 0 44.48L109.28 256 9.21 356.07c-12.28 12.28-12.28 32.19 0 44.48l22.24 22.24c12.28 12.28 32.2 12.28 44.48 0L176 322.72l100.07 100.07c12.28 12.28 32.2 12.28 44.48 0l22.24-22.24c12.28-12.28 12.28-32.19 0-44.48L242.72 256z"/></svg></span></td></tr>
<tr class="g" style="height:84.65px;--p:0.8px"><td><svg style="margin:0 auto" width="10.15" height="11.6" viewBox="0 0 448 512"><path fill="#dc8420" d="M416 208H272V64c0-17.67-14.33-32-32-32h-32c-17.67 0-32 14.33-32 32v144H32c-17.67 0-32 14.33-32 32v32c0 17.67 14.33 32 32 32h144v144c0 17.67 14.33 32 32 32h32c17.67 0 32-14.33 32-32V304h144c17.67 0 32-14.33 32-32v-32c0-17.67-14.33-32-32-32z"/></svg></td><td><span class="pill">Abilitato</span></td><td>T3803</td><td>17/03/2022</td><td>ADMIN</td><td>ADMIN</td><td><i>AAAAAA11...</i></td><td>Fondazione</td><td><i>FONDAZIO...</i>CLUGIA<br>ANFFAS<br>ONLUS</td><td><i>FONDAZIO...</i>CLUGIA<br>ANFFAS<br>ONLUS</td><td>91018360270</td><td>Socio<br>Sanitario</td><td class="b"><span class="ab gr"><svg width="13.0" height="13" viewBox="0 0 512 512"><path fill="#fff" d="M173.898 439.404l-166.4-166.4c-9.997-9.997-9.997-26.206 0-36.204l36.203-36.204c9.997-9.998 26.207-9.998 36.204 0L192 312.69 432.095 72.596c9.997-9.997 26.207-9.997 36.204 0l36.203 36.204c9.997 9.997 9.997 26.206 0 36.204l-294.4 294.401c-9.998 9.997-26.207 9.997-36.204-.001z"/></svg></span></td><td class="b"><span class="ab bl"><svg width="14.62" height="13" viewBox="0 0 576 512"><path fill="#fff" d="M402.600 83.200l90.200 90.200c3.800 3.800 3.800 10 0 13.800L274.400 405.600l-92.800 10.300c-12.400 1.400-22.900-9.100-21.500-21.500l10.300-92.800L388.800 83.200c3.800-3.800 10-3.800 13.800 0zm162-22.900l-48.800-48.800c-15.200-15.200-39.900-15.200-55.200 0l-35.400 35.400c-3.800 3.800-3.800 10 0 13.800l90.200 90.200c3.800 3.800 10 3.800 13.800 0l35.400-35.400c15.200-15.300 15.200-40 0-55.200zM384 346.200V448H64V128h229.800c3.200 0 6.200-1.300 8.500-3.500l40-40c7.600-7.600 2.200-20.500-8.500-20.500H48C21.500 64 0 85.500 0 112v352c0 26.500 21.500 48 48 48h352c26.500 0 48-21.500 48-48V306.200c0-10.700-12.900-16-20.500-8.500l-40 40c-2.200 2.300-3.500 5.300-3.500 8.500z"/></svg></span></td><td class="b"><span class="ab rd"><svg width="8.94" height="13" viewBox="0 0 352 512"><path fill="#fff" d="M242.72 256l100.07-100.07c12.28-12.28 12.28-32.19 0-44.48l-22.24-22.24c-12.28-12.28-32.19-12.28-44.48 0L176 189.28 75.93 89.21c-12.28-12.28-32.19-12.28-44.48 0L9.21 111.45c-12.28 12.28-12.28 32.19 0 44.48L109.28 256 9.21 356.07c-12.28 12.28-12.28 32.19 0 44.48l22.24 22.24c12.28 12.28 32.2 12.28 44.48 0L176 322.72l100.07 100.07c12.28 12.28 32.2 12.28 44.48 0l22.24-22.24c12.28-12.28 12.28-32.19 0-44.48L242.72 256z"/></svg></span></td></tr>
<tr class="hv" style="height:66.7px;--p:0px"><td><svg style="margin:0 auto" width="10.15" height="11.6" viewBox="0 0 448 512"><path fill="#dc8420" d="M416 208H272V64c0-17.67-14.33-32-32-32h-32c-17.67 0-32 14.33-32 32v144H32c-17.67 0-32 14.33-32 32v32c0 17.67 14.33 32 32 32h144v144c0 17.67 14.33 32 32 32h32c17.67 0 32-14.33 32-32V304h144c17.67 0 32-14.33 32-32v-32c0-17.67-14.33-32-32-32z"/></svg></td><td><span class="pill">Abilitato</span></td><td>T3813</td><td>17/03/2022</td><td>ADMIN</td><td>ADMIN</td><td><i>AAAAAA11...</i></td><td>Fondazione</td><td>Fondazione<br>Santi Antonio<br>e Michele</td><td>Fondazione<br>Santi Antonio<br>e Michele</td><td>01250200258</td><td>Socio<br>Sanitario</td><td class="b"><span class="ab gr"><svg width="13.0" height="13" viewBox="0 0 512 512"><path fill="#fff" d="M173.898 439.404l-166.4-166.4c-9.997-9.997-9.997-26.206 0-36.204l36.203-36.204c9.997-9.998 26.207-9.998 36.204 0L192 312.69 432.095 72.596c9.997-9.997 26.207-9.997 36.204 0l36.203 36.204c9.997 9.997 9.997 26.206 0 36.204l-294.4 294.401c-9.998 9.997-26.207 9.997-36.204-.001z"/></svg></span></td><td class="b"><span class="ab bl"><svg width="14.62" height="13" viewBox="0 0 576 512"><path fill="#fff" d="M402.600 83.200l90.200 90.200c3.800 3.800 3.800 10 0 13.800L274.400 405.600l-92.800 10.300c-12.400 1.400-22.900-9.100-21.500-21.500l10.300-92.800L388.800 83.200c3.800-3.800 10-3.800 13.800 0zm162-22.900l-48.800-48.800c-15.200-15.200-39.900-15.200-55.200 0l-35.400 35.400c-3.800 3.800-3.800 10 0 13.800l90.200 90.200c3.800 3.800 10 3.800 13.800 0l35.400-35.400c15.200-15.300 15.200-40 0-55.200zM384 346.200V448H64V128h229.800c3.200 0 6.200-1.300 8.500-3.500l40-40c7.600-7.600 2.200-20.500-8.500-20.500H48C21.500 64 0 85.500 0 112v352c0 26.500 21.500 48 48 48h352c26.500 0 48-21.500 48-48V306.200c0-10.700-12.900-16-20.500-8.500l-40 40c-2.200 2.300-3.500 5.300-3.500 8.500z"/></svg></span></td><td class="b"><span class="ab rd"><svg width="8.94" height="13" viewBox="0 0 352 512"><path fill="#fff" d="M242.72 256l100.07-100.07c12.28-12.28 12.28-32.19 0-44.48l-22.24-22.24c-12.28-12.28-32.19-12.28-44.48 0L176 189.28 75.93 89.21c-12.28-12.28-32.19-12.28-44.48 0L9.21 111.45c-12.28 12.28-12.28 32.19 0 44.48L109.28 256 9.21 356.07c-12.28 12.28-12.28 32.19 0 44.48l22.24 22.24c12.28 12.28 32.2 12.28 44.48 0L176 322.72l100.07 100.07c12.28 12.28 32.2 12.28 44.48 0l22.24-22.24c12.28-12.28 12.28-32.19 0-44.48L242.72 256z"/></svg></span></td></tr>
<tr class="g" style="height:85.0px;--p:2.4px"><td><svg style="margin:0 auto" width="10.15" height="11.6" viewBox="0 0 448 512"><path fill="#dc8420" d="M416 208H272V64c0-17.67-14.33-32-32-32h-32c-17.67 0-32 14.33-32 32v144H32c-17.67 0-32 14.33-32 32v32c0 17.67 14.33 32 32 32h144v144c0 17.67 14.33 32 32 32h32c17.67 0 32-14.33 32-32V304h144c17.67 0 32-14.33 32-32v-32c0-17.67-14.33-32-32-32z"/></svg></td><td><span class="pill">Abilitato</span></td><td>T3811</td><td>17/03/2022</td><td>ADMIN</td><td>ADMIN</td><td><i>AAAAAA11...</i></td><td>Fondazione</td><td>Fondazione<br>Madre<br>Gaetana<br>Sterni</td><td>Fondazione<br>Madre<br>Gaetana<br>Sterni</td><td>04311730248</td><td>Socio<br>Sanitario</td><td class="b"><span class="ab gr"><svg width="13.0" height="13" viewBox="0 0 512 512"><path fill="#fff" d="M173.898 439.404l-166.4-166.4c-9.997-9.997-9.997-26.206 0-36.204l36.203-36.204c9.997-9.998 26.207-9.998 36.204 0L192 312.69 432.095 72.596c9.997-9.997 26.207-9.997 36.204 0l36.203 36.204c9.997 9.997 9.997 26.206 0 36.204l-294.4 294.401c-9.998 9.997-26.207 9.997-36.204-.001z"/></svg></span></td><td class="b"><span class="ab bl"><svg width="14.62" height="13" viewBox="0 0 576 512"><path fill="#fff" d="M402.600 83.200l90.200 90.200c3.800 3.800 3.800 10 0 13.800L274.400 405.600l-92.800 10.300c-12.400 1.400-22.900-9.100-21.500-21.500l10.300-92.800L388.800 83.200c3.800-3.800 10-3.800 13.800 0zm162-22.900l-48.800-48.800c-15.200-15.200-39.900-15.200-55.200 0l-35.400 35.400c-3.800 3.800-3.800 10 0 13.800l90.200 90.200c3.800 3.800 10 3.800 13.800 0l35.400-35.400c15.200-15.300 15.200-40 0-55.200zM384 346.200V448H64V128h229.800c3.200 0 6.200-1.300 8.500-3.500l40-40c7.600-7.600 2.200-20.500-8.500-20.500H48C21.500 64 0 85.500 0 112v352c0 26.500 21.500 48 48 48h352c26.500 0 48-21.500 48-48V306.200c0-10.700-12.900-16-20.500-8.500l-40 40c-2.200 2.300-3.500 5.300-3.500 8.500z"/></svg></span></td><td class="b"><span class="ab rd"><svg width="8.94" height="13" viewBox="0 0 352 512"><path fill="#fff" d="M242.72 256l100.07-100.07c12.28-12.28 12.28-32.19 0-44.48l-22.24-22.24c-12.28-12.28-32.19-12.28-44.48 0L176 189.28 75.93 89.21c-12.28-12.28-32.19-12.28-44.48 0L9.21 111.45c-12.28 12.28-12.28 32.19 0 44.48L109.28 256 9.21 356.07c-12.28 12.28-12.28 32.19 0 44.48l22.24 22.24c12.28 12.28 32.2 12.28 44.48 0L176 322.72l100.07 100.07c12.28 12.28 32.2 12.28 44.48 0l22.24-22.24c12.28-12.28 12.28-32.19 0-44.48L242.72 256z"/></svg></span></td></tr>
<tr class="w" style="height:104.3px;--p:0px"><td><svg style="margin:0 auto" width="10.15" height="11.6" viewBox="0 0 448 512"><path fill="#dc8420" d="M416 208H272V64c0-17.67-14.33-32-32-32h-32c-17.67 0-32 14.33-32 32v144H32c-17.67 0-32 14.33-32 32v32c0 17.67 14.33 32 32 32h144v144c0 17.67 14.33 32 32 32h32c17.67 0 32-14.33 32-32V304h144c17.67 0 32-14.33 32-32v-32c0-17.67-14.33-32-32-32z"/></svg></td><td><span class="pill">Abilitato</span></td><td>T1180</td><td>30/04/2019</td><td>DANIELE</td><td>ANDREOTTI</td><td><i>NDRDNL58...</i></td><td>Fondazione</td><td><i>FONDAZIO...</i>OPERA<br>PADRE<br>LEOPOLDO<br>CAPPUCCINI</td><td><i>FONDAZIO...</i>OPERA<br>PADRE<br>LEOPOLDO<br>CAPPUCCINI</td><td>01305060293</td><td>Sociale</td><td class="b"><span class="ab gr"><svg width="13.0" height="13" viewBox="0 0 512 512"><path fill="#fff" d="M173.898 439.404l-166.4-166.4c-9.997-9.997-9.997-26.206 0-36.204l36.203-36.204c9.997-9.998 26.207-9.998 36.204 0L192 312.69 432.095 72.596c9.997-9.997 26.207-9.997 36.204 0l36.203 36.204c9.997 9.997 9.997 26.206 0 36.204l-294.4 294.401c-9.998 9.997-26.207 9.997-36.204-.001z"/></svg></span></td><td class="b"><span class="ab bl"><svg width="14.62" height="13" viewBox="0 0 576 512"><path fill="#fff" d="M402.600 83.200l90.200 90.200c3.800 3.800 3.800 10 0 13.800L274.400 405.600l-92.800 10.300c-12.400 1.400-22.900-9.100-21.500-21.500l10.300-92.800L388.800 83.200c3.800-3.800 10-3.800 13.800 0zm162-22.900l-48.800-48.800c-15.200-15.200-39.900-15.200-55.200 0l-35.400 35.400c-3.800 3.800-3.800 10 0 13.800l90.200 90.200c3.800 3.800 10 3.800 13.800 0l35.400-35.400c15.200-15.300 15.200-40 0-55.200zM384 346.200V448H64V128h229.800c3.200 0 6.200-1.300 8.500-3.500l40-40c7.600-7.600 2.200-20.500-8.500-20.500H48C21.500 64 0 85.500 0 112v352c0 26.500 21.500 48 48 48h352c26.500 0 48-21.500 48-48V306.200c0-10.700-12.900-16-20.500-8.500l-40 40c-2.200 2.300-3.500 5.300-3.500 8.500z"/></svg></span></td><td class="b"><span class="ab rd"><svg width="8.94" height="13" viewBox="0 0 352 512"><path fill="#fff" d="M242.72 256l100.07-100.07c12.28-12.28 12.28-32.19 0-44.48l-22.24-22.24c-12.28-12.28-32.19-12.28-44.48 0L176 189.28 75.93 89.21c-12.28-12.28-32.19-12.28-44.48 0L9.21 111.45c-12.28 12.28-12.28 32.19 0 44.48L109.28 256 9.21 356.07c-12.28 12.28-12.28 32.19 0 44.48l22.24 22.24c12.28 12.28 32.2 12.28 44.48 0L176 322.72l100.07 100.07c12.28 12.28 32.2 12.28 44.48 0l22.24-22.24c12.28-12.28 12.28-32.19 0-44.48L242.72 256z"/></svg></span></td></tr>
<tr class="g" style="height:85.0px;--p:1.4px"><td><svg style="margin:0 auto" width="10.15" height="11.6" viewBox="0 0 448 512"><path fill="#dc8420" d="M416 208H272V64c0-17.67-14.33-32-32-32h-32c-17.67 0-32 14.33-32 32v144H32c-17.67 0-32 14.33-32 32v32c0 17.67 14.33 32 32 32h144v144c0 17.67 14.33 32 32 32h32c17.67 0 32-14.33 32-32V304h144c17.67 0 32-14.33 32-32v-32c0-17.67-14.33-32-32-32z"/></svg></td><td><span class="pill">Abilitato</span></td><td>T1181</td><td>30/04/2019</td><td>ADMIN</td><td>ADMIN</td><td><i>AAAAAA11...</i></td><td>Fondazione</td><td>Fondazione<br>Opera<br>Immacolata<br>Concezione</td><td>Fondazione<br>Opera<br>Immacolata<br>Concezione</td><td>00558060281</td><td>Socio<br>Sanitario</td><td class="b"><span class="ab gr"><svg width="13.0" height="13" viewBox="0 0 512 512"><path fill="#fff" d="M173.898 439.404l-166.4-166.4c-9.997-9.997-9.997-26.206 0-36.204l36.203-36.204c9.997-9.998 26.207-9.998 36.204 0L192 312.69 432.095 72.596c9.997-9.997 26.207-9.997 36.204 0l36.203 36.204c9.997 9.997 9.997 26.206 0 36.204l-294.4 294.401c-9.998 9.997-26.207 9.997-36.204-.001z"/></svg></span></td><td class="b"><span class="ab bl"><svg width="14.62" height="13" viewBox="0 0 576 512"><path fill="#fff" d="M402.600 83.200l90.200 90.200c3.800 3.800 3.800 10 0 13.800L274.400 405.600l-92.800 10.300c-12.400 1.400-22.900-9.100-21.500-21.500l10.300-92.800L388.800 83.200c3.800-3.800 10-3.800 13.800 0zm162-22.900l-48.800-48.800c-15.200-15.200-39.900-15.200-55.200 0l-35.400 35.400c-3.800 3.800-3.800 10 0 13.800l90.200 90.200c3.800 3.800 10 3.800 13.800 0l35.400-35.400c15.200-15.300 15.200-40 0-55.200zM384 346.200V448H64V128h229.800c3.200 0 6.200-1.300 8.500-3.500l40-40c7.600-7.600 2.200-20.500-8.500-20.500H48C21.500 64 0 85.500 0 112v352c0 26.500 21.500 48 48 48h352c26.500 0 48-21.500 48-48V306.200c0-10.700-12.900-16-20.500-8.500l-40 40c-2.200 2.300-3.500 5.300-3.500 8.500z"/></svg></span></td><td class="b"><span class="ab rd"><svg width="8.94" height="13" viewBox="0 0 352 512"><path fill="#fff" d="M242.72 256l100.07-100.07c12.28-12.28 12.28-32.19 0-44.48l-22.24-22.24c-12.28-12.28-32.19-12.28-44.48 0L176 189.28 75.93 89.21c-12.28-12.28-32.19-12.28-44.48 0L9.21 111.45c-12.28 12.28-12.28 32.19 0 44.48L109.28 256 9.21 356.07c-12.28 12.28-12.28 32.19 0 44.48l22.24 22.24c12.28 12.28 32.2 12.28 44.48 0L176 322.72l100.07 100.07c12.28 12.28 32.2 12.28 44.48 0l22.24-22.24c12.28-12.28 12.28-32.19 0-44.48L242.72 256z"/></svg></span></td></tr>
</tbody></table>
<div id="gsh"></div><div id="gsc"><svg width="7" height="4" viewBox="0 0 9 5" style="position:absolute;left:4.5px;top:7px"><path d="M0 5 L4.5 0 L9 5Z" fill="#a8a8a8"/></svg></div></div>
 <div id="red"></div>
</div>

<svg width="12" height="18" viewBox="0 0 13 20" style="position:absolute;left:1492.6px;top:586.6px"><path d="M1 1 V16.5 L4.6 13 L7 18.8 L9.3 17.8 L6.9 12.2 H11.8 Z" fill="#fff" stroke="#222" stroke-width="1.1" stroke-linejoin="round"/></svg>
<div id="pbar"><svg class="ar" width="9" height="5" viewBox="0 0 9 5" style="left:3.5px;top:5px"><path d="M0 5 L4.5 0 L9 5Z" fill="#505050"/></svg><i style="top:15px;height:379px"></i><svg class="ar" width="9" height="5" viewBox="0 0 9 5" style="left:3.5px;top:881.5px"><path d="M0 0 L4.5 5 L9 0Z" fill="#505050"/></svg></div>
</div>
</body>
</html>
